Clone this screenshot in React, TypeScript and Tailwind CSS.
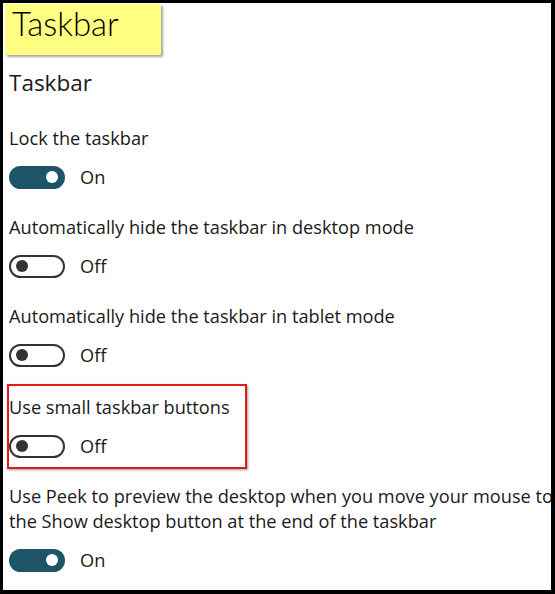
import React from "react";

const font = { fontFamily: '"Open Sans", "Noto Sans", sans-serif' };

function Toggle({ on }: { on: boolean }) {
  return (
    <div className="flex items-center h-[24px]">
      {on ? (
        <div className="w-[56px] h-[23px] rounded-full bg-[#1d5468] flex items-center justify-end pr-[7px]">
          <div className="w-[12px] h-[12px] rounded-full bg-white" />
        </div>
      ) : (
        <div className="w-[56px] h-[23px] rounded-full border-2 border-[#333333] flex items-center pl-[5px]">
          <div className="w-[12px] h-[12px] rounded-full bg-[#333333]" />
        </div>
      )}
      <span className="ml-[15px] text-[18.2px] leading-none text-[#1a1a1a]">{on ? "On" : "Off"}</span>
    </div>
  );
}

function Setting({ label, on }: { label: React.ReactNode; on: boolean }) {
  return (
    <div className="flex flex-col">
      <div className="text-[18.2px] leading-[25px] text-[#1a1a1a] whitespace-nowrap">{label}</div>
      <div className="mt-[14px]">
        <Toggle on={on} />
      </div>
    </div>
  );
}

export default function App() {
  return (
    <div
      style={font}
      className="w-[555px] h-[594px] bg-white border-t-[3px] border-l-[3px] border-r-4 border-b-4 border-black overflow-hidden flex flex-col"
    >
      <div className="ml-[2px] mt-[1px] w-[156px] h-[51px] bg-[#fefe80] shadow-[2px_2px_2px_rgba(0,0,0,0.35)] pl-[7px]">
        <span
          className="text-[33px] leading-[38px] font-light text-black"
          style={{ fontFamily: 'Lato, "Open Sans", sans-serif' }}
        >
          Taskbar
        </span>
      </div>
      <div className="pl-[6px] flex flex-col">
        <div className="mt-[12px] text-[22.5px] leading-[32px] text-[#1a1a1a]">Taskbar</div>
        <div className="mt-[27px] flex flex-col gap-[26px]">
          <Setting label="Lock the taskbar" on={true} />
          <Setting label="Automatically hide the taskbar in desktop mode" on={false} />
          <Setting label="Automatically hide the taskbar in tablet mode" on={false} />
          <div className="-ml-[2px] -mt-[9px] w-[240px] border-2 border-[#e01b1b] shadow-[1px_1px_2px_rgba(0,0,0,0.4)] pt-[9px] pb-[9px]">
            <Setting label="Use small taskbar buttons" on={false} />
          </div>
          <div className="-mt-[11px] flex flex-col">
            <div className="text-[18.2px] leading-[25px] text-[#1a1a1a] whitespace-nowrap">
              Use Peek to preview the desktop when you move your mouse to
            </div>
            <div className="text-[18.2px] leading-[25px] text-[#1a1a1a] whitespace-nowrap">
              the Show desktop button at the end of the taskbar
            </div>
            <div className="mt-[14px]">
              <Toggle on={true} />
            </div>
          </div>
        </div>
      </div>
    </div>
  );
}
